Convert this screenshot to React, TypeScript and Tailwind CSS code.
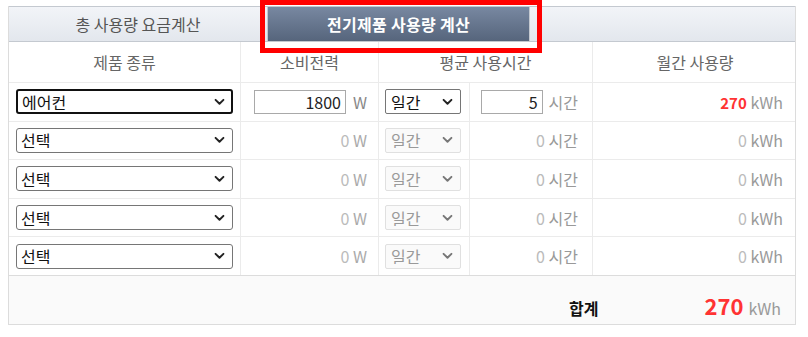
import { useState } from "react";

const FONT = { fontFamily: '"Noto Sans CJK KR", "Noto Sans", sans-serif' };

const COLS = "grid grid-cols-[232px_138px_91px_123px_204px]";

function Chevron({ muted }: { muted?: boolean }) {
  return (
    <svg
      viewBox="0 0 12 8"
      className="pointer-events-none absolute right-[8px] top-1/2 h-[7px] w-[11px] -translate-y-1/2"
    >
      <path
        d="M1.5 1.5 L6 6 L10.5 1.5"
        fill="none"
        stroke={muted ? "#777" : "#222"}
        strokeWidth="2.2"
        strokeLinecap="round"
        strokeLinejoin="round"
      />
    </svg>
  );
}

function ProductSelect({ value, focused }: { value: string; focused?: boolean }) {
  return (
    <div className="relative w-[217px] h-[25px]">
      <select
        defaultValue={value}
        style={FONT}
        className={`h-full w-full appearance-none rounded-[3px] bg-white pl-[4px] text-[16px] leading-none text-[#111] outline-none ${
          focused ? "border-2 border-[#111]" : "border border-[#767676]"
        }`}
      >
        <option>선택</option>
        <option>에어컨</option>
        <option>냉장고</option>
        <option>세탁기</option>
      </select>
      <Chevron />
    </div>
  );
}

function PeriodSelect({ disabled }: { disabled?: boolean }) {
  return (
    <div className="relative w-[76px] h-[25px]">
      <select
        disabled={disabled}
        style={FONT}
        className={`h-full w-full appearance-none rounded-[2px] pl-[5px] text-[16px] leading-none outline-none ${
          disabled
            ? "border border-[#e0e0e0] bg-[#fafafa] text-[#999]"
            : "border border-[#767676] bg-white text-[#111]"
        }`}
      >
        <option>일간</option>
        <option>주간</option>
        <option>월간</option>
      </select>
      <Chevron muted={disabled} />
    </div>
  );
}

type Row = { product: string; watt: number; hours: number; active: boolean };

export default function App() {
  const [rows] = useState<Row[]>([
    { product: "에어컨", watt: 1800, hours: 5, active: true },
    { product: "선택", watt: 0, hours: 0, active: false },
    { product: "선택", watt: 0, hours: 0, active: false },
    { product: "선택", watt: 0, hours: 0, active: false },
    { product: "선택", watt: 0, hours: 0, active: false },
  ]);

  const monthly = (r: Row) => Math.round((r.watt * r.hours * 30) / 1000);
  const total = rows.reduce((s, r) => s + monthly(r), 0);

  return (
    <div style={FONT} className="bg-white pt-[6px] pl-[8px] w-[808px] h-[337px]">
      <div className="relative w-[788px] border-x border-b border-[#dcdcdc]">
        {/* 탭 */}
        <div className="flex h-[36px] border-t border-b border-[#c4c9d0] bg-gradient-to-b from-[#f2f4f8] to-[#e3e7ed]">
          <button className="flex w-[259px] items-center justify-center border-r border-[#c4c9d0] text-[16px] text-[#555]">
            총 사용량 요금계산
          </button>
          <button className="flex w-[261px] items-center justify-center bg-gradient-to-b from-[#7888a1] to-[#56657c] text-[16px] font-bold tracking-[0.3px] text-white">
            전기제품 사용량 계산
          </button>
          <div className="flex-1 border-l border-[#c4c9d0]" />
        </div>

        {/* 선택 표시 */}
        <div className="pointer-events-none absolute left-[251px] top-[-6px] h-[53px] w-[282px] border-[5px] border-[#ff0000]" />

        {/* 헤더 */}
        <div className={`${COLS} h-[41px] border-b border-[#ebebeb] text-[16px] text-[#666]`}>
          <div className="flex items-center justify-center border-r border-[#ebebeb]">제품 종류</div>
          <div className="flex items-center justify-center border-r border-[#ebebeb]">소비전력</div>
          <div className="col-span-2 flex items-center justify-center border-r border-[#ebebeb]">평균 사용시간</div>
          <div className="flex items-center justify-center">월간 사용량</div>
        </div>

        {/* 행 */}
        {rows.map((r, i) => (
          <div
            key={i}
            className={`${COLS} h-[38.6px] text-[16px] ${i < rows.length - 1 ? "border-b border-[#ebebeb]" : "border-b border-[#dcdcdc]"}`}
          >
            <div className="flex items-center pl-[7px] border-r border-[#ebebeb]">
              <ProductSelect value={r.product} focused={i === 0} />
            </div>
            <div className="flex items-center justify-end pr-[11px] border-r border-[#ebebeb]">
              {r.active ? (
                <>
                  <input
                    defaultValue={r.watt}
                    style={FONT}
                    className="h-[24px] w-[92px] border border-[#a9a9a9] px-[4px] text-right text-[16px] text-[#222] outline-none"
                  />
                  <span className="ml-[7px] text-[#888]">W</span>
                </>
              ) : (
                <span className="text-[#bbb]">
                  0 <span className="text-[#aaa]">W</span>
                </span>
              )}
            </div>
            <div className="flex items-center pl-[6px] border-r border-[#ebebeb]">
              <PeriodSelect disabled={!r.active} />
            </div>
            <div className="flex items-center justify-end pr-[14px] border-r border-[#ebebeb]">
              {r.active ? (
                <>
                  <input
                    defaultValue={r.hours}
                    style={FONT}
                    className="h-[24px] w-[62px] border border-[#a9a9a9] px-[4px] text-right text-[16px] text-[#222] outline-none"
                  />
                  <span className="ml-[6px] text-[#999]">시간</span>
                </>
              ) : (
                <span className="text-[#bbb]">
                  0 <span className="text-[#999]">시간</span>
                </span>
              )}
            </div>
            <div className="flex items-center justify-end pr-[14px]">
              {r.active ? (
                <span>
                  <span className="font-bold text-[15px] text-[#ff3333]">{monthly(r)}</span>{" "}
                  <span className="text-[#999]">kWh</span>
                </span>
              ) : (
                <span className="text-[#bbb]">
                  0 <span className="text-[#999]">kWh</span>
                </span>
              )}
            </div>
          </div>
        ))}

        {/* 합계 */}
        <div className="flex h-[48px] items-baseline justify-end bg-[#fafafa] pr-[14px] pt-[13px]">
          <span className="mr-[106px] text-[16px] font-bold text-[#111]">합계</span>
          <span className="text-[22px] font-bold text-[#ff3333]">{total}</span>
          <span className="ml-[5px] text-[16px] text-[#999]">kWh</span>
        </div>
      </div>
    </div>
  );
}
